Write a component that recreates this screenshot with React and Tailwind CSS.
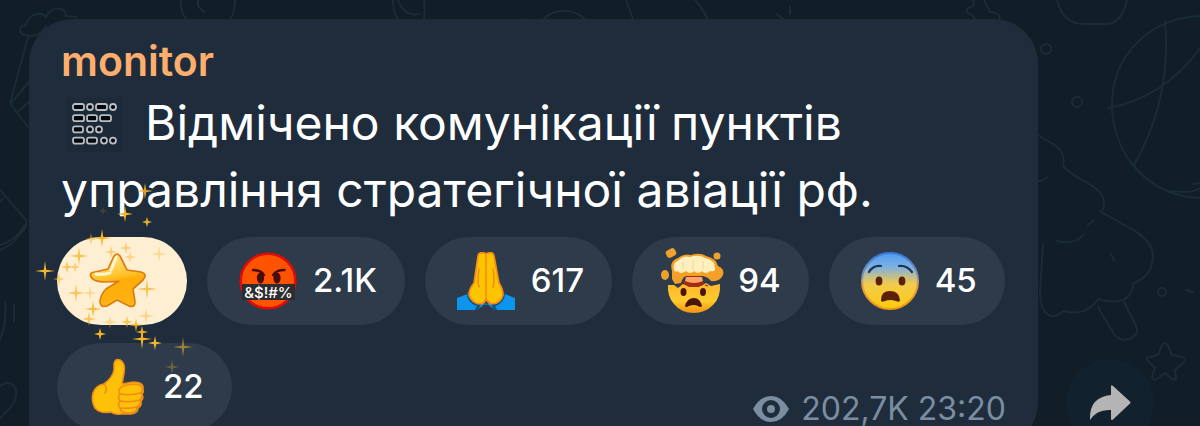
import React from "react";

function Wallpaper() {
  return (
    <svg
      aria-hidden="true"
      viewBox="0 0 1200 426"
      preserveAspectRatio="xMidYMin slice"
      className="absolute inset-0 h-full w-full"
      fill="none"
      stroke="#1a2c37"
      strokeWidth="2"
      strokeLinecap="round"
      strokeLinejoin="round"
    >
      <path d="M26 35C18 34 18 25 26 25C28 15 40 10 46 17C50 6 66 6 66 16L76 17M26 35C34 38 42 34 46 26M28 37L11 100Q10 103 12 106L32 132M12 102L34 76M19 111L34 97" />
      <path d="M0 190L26 220Q28 226 22 232Q12 246 0 250M25 225Q14 242 0 245M0 202L3 198" />
      <path d="M5 302Q7 322 0 340M14 305V322M0 386Q8 380 14 386Q20 396 10 408L0 418" />
      <path d="M181 0Q180 12 187 20M235 0Q235 12 230 20M198 0V6L204 12M393 0Q392 14 402 24L412 32M398 0Q404 17 420 14M424 0Q427 20 418 32" />
      <path d="M516 24Q519 18 527 20Q537 21 541 32M540 24Q548 10 566 11Q584 12 594 32M626 0L640 38M695 0Q708 14 711 32M777 14L784 20M790 6V14M790 38Q792 24 799 22Q804 24 808 36" />
      <path d="M973 0Q976 6 968 8Q964 12 972 15L976 20L973 30Q974 40 983 36Q992 42 998 36L996 24L1000 18Q998 12 990 12L984 0" />
      <path d="M1057 0Q1063 24 1084 24H1108Q1122 22 1127 0" />
      <circle cx="1046" cy="49" r="5" />
      <circle cx="1077" cy="102" r="5" />
      <circle cx="1162" cy="292" r="4" />
      <path d="M1200 16C1150 18 1113 55 1112 102C1111 155 1150 197 1200 198M1165 22Q1172 98 1134 165M1108 108Q1164 98 1200 48M1172 191Q1192 194 1200 188M1193 184L1200 183" />
      <path d="M1038 135L1056 146Q1066 154 1063 166Q1070 174 1086 182Q1104 192 1104 203Q1104 209 1101 212L1128 227Q1153 240 1153 257Q1152 276 1134 283Q1130 305 1108 301Q1102 301 1098 299Q1086 317 1063 311Q1051 322 1043 309Q1040 302 1040 294L1043 244M1038 181Q1045 181 1048 176M1057 241Q1075 245 1083 235M1088 225L1094 220M1098 307L1114 334Q1122 344 1133 337Q1139 332 1136 326L1124 302M1111 254L1114 260" />
      <path d="M1162 345Q1165 341 1168 346L1172 355L1182 357Q1187 359 1183 363L1175 370L1176 377Q1176 381 1172 379L1165 373L1157 379Q1152 381 1152 376L1155 368L1148 361Q1145 357 1150 357L1158 355ZM1186 290L1193 292" />
    </svg>
  );
}

const ROWS = [
  [[0, 11], [14, 6], [23, 11], [37, 6]],
  [[0, 11], [14, 10], [27, 11]],
  [[0, 10], [14, 6], [23, 6]],
  [[0, 11], [14, 10], [28, 6], [37, 6]],
];

function ChannelEmoji() {
  return (
    <svg role="img" aria-label="Channel emblem" viewBox="0 0 54 54" className="h-[54px] w-[54px] shrink-0">
      <rect width="54" height="54" fill="#1c2937" />
      <g fill="#05090e" stroke="#b9bec4" strokeWidth="1.8">
        {ROWS.map((row, r) =>
          row.map(([x, w]) => (
            <rect key={`${r}-${x}`} x={x + 6} y={r * 11.2 + 6} width={w} height="6" rx={w > 6 ? 2 : 3} />
          ))
        )}
      </g>
    </svg>
  );
}

function StarEmoji() {
  return (
    <svg role="img" aria-label="Star" viewBox="0 0 58 58" className="h-[58px] w-[58px] shrink-0">
      <defs>
        <linearGradient id="star" x1="0" y1="0" x2="0.2" y2="1">
          <stop offset="0" stopColor="#ffe9a0" />
          <stop offset="0.45" stopColor="#ffc835" />
          <stop offset="0.62" stopColor="#ffad0a" />
          <stop offset="1" stopColor="#ffb81c" />
        </linearGradient>
      </defs>
      <path d="M26 4Q29 0 32 4L39 18L53 20Q60 22 55 28L45 37L47 50Q47 56 41 54L29 48L19 54Q12 56 12 49Q13 42 18 37L31 29Q25 30 17 30Q6 30 3 25Q1 20 7 20L20 17Z" fill="url(#star)" stroke="#dc7c10" strokeWidth="1.700" strokeLinejoin="round" />
      <path d="M24 28L34 27L53 23L43 36L45 50Q44 53 39 51L29 45L18 51Q14 52 14 48Q15 42 21 38L34 29Z" fill="#ffae0b" opacity=".65" />
      <path d="M28 6L23 18M8 22Q14 23 22 21" fill="none" stroke="#fff6d2" strokeWidth="3" strokeLinecap="round" />
    </svg>
  );
}

function CensoredEmoji() {
  return (
    <svg role="img" aria-label="Swearing face" viewBox="0 0 58 58" className="h-[58px] w-[58px] shrink-0">
      <circle cx="29" cy="29" r="27.3" fill="#ff5300" stroke="#df0b0b" strokeWidth="2.6" />
      <g fill="#4a0d05">
        <ellipse cx="21.5" cy="26" rx="3.6" ry="5.5" />
        <ellipse cx="38" cy="26" rx="3.6" ry="5.5" />
      </g>
      <path d="M14 18Q22 18 25 23M45.500 18Q37 18 34 23" fill="none" stroke="#4a0d05" strokeWidth="2.4" strokeLinecap="round" />
      <rect x="3" y="32" width="53" height="16" rx="1" fill="#2d2d2f" />
      <text x="29.500" y="45.500" textAnchor="middle" fill="#fff" fontSize="15" fontWeight="500" fontFamily="Inter, sans-serif">&amp;$!#%</text>
    </svg>
  );
}

function PrayEmoji() {
  return (
    <svg role="img" aria-label="Folded hands" viewBox="0 0 58 58" className="h-[58px] w-[58px] shrink-0">
      <path d="M0 46L13 41L29 53L45 41L58 46V59H39L29 51L19 59H0Z" fill="#0d95ee" />
      <path d="M11 40Q12 51 22 53L19 59M47 40Q46 51 36 53L39 59" fill="none" stroke="#14547e" strokeWidth="3" />
      <path d="M28.500 1.500Q22 -1 21 4L17 31Q12 37 12 43Q15 52 24 52Q28 51 29 47Q31 51 35 52Q44 51 46 43Q46 37 42 31L37 4Q36 -1 30 1.500Z" fill="#ffc400" stroke="#f58a18" strokeWidth="1.700" strokeLinejoin="round" />
      <path d="M29 2V48M22 17Q20 28 22 35M36 17Q38 28 36 35" fill="none" stroke="#f28a15" strokeWidth="1.500" strokeLinecap="round" />
    </svg>
  );
}

function MindBlownEmoji() {
  return (
    <svg role="img" aria-label="Exploding head" viewBox="0 0 64 66" className="-mx-[3px] h-[66px] w-16 shrink-0">
      <defs>
        <linearGradient id="head" x1="0" y1="0" x2="0" y2="1">
          <stop offset="0" stopColor="#ffb52c" />
          <stop offset=".6" stopColor="#ffcb2e" />
          <stop offset="1" stopColor="#f2920c" />
        </linearGradient>
      </defs>
      <path d="M7 37L13 37L17 40L22 36L27 38H40L45 35L50 38L59 36Q60 49 52 57Q44 65 33 65Q20 65 13 56Q6 48 7 37Z" fill="url(#head)" />
      <path d="M22 35L28 39H38L43 35L39 28H27Z" fill="#a52b10" />
      <path d="M25 29H41L42 33Q33 37 24 33Z" fill="#ffa468" />
      <path d="M11 23Q8 13 17 10Q23 5 30 7Q39 4 45 8Q55 10 57 18Q64 21 62 27Q59 34 50 33Q46 28 40 28H26Q22 28 20 35L14 36L11 31Z" fill="#f2a126" />
      <path d="M13 22Q11 15 18 12Q22 7 29 9Q38 6 44 10Q54 12 54 20Q55 24 49 23Q45 27 41 23Q37 27 33 23Q29 27 25 23Q19 27 17 23Q14 25 13 22Z" fill="#fff0bd" />
      <path d="M22 14V21M32 12V22M42 13V21" fill="none" stroke="#edd497" strokeWidth="1" />
      <g fill="#efa12c">
        <rect x="5" y="1" width="10" height="8" rx="3" transform="rotate(-28 10 5)" />
        <circle cx="56" cy="8" r="3.500" />
        <ellipse cx="4" cy="27" rx="4" ry="5" />
        <path d="M12 28Q18 25 20 31L17 35L12 33Z" />
      </g>
      <g fill="#4b1608">
        <ellipse cx="22.500" cy="44" rx="3" ry="4" />
        <ellipse cx="42" cy="44" rx="3" ry="4" />
        <path d="M24 58Q26 50 33 50Q39 50 41 58Q40 60 37 58Q33 56 28 58Q25 60 24 58Z" />
      </g>
      <path d="M18 37L21 36M44 37L47 38" stroke="#8a2e0b" strokeWidth="1.300" />
    </svg>
  );
}

function FearfulEmoji() {
  return (
    <svg role="img" aria-label="Fearful face" viewBox="0 0 58 58" className="h-[58px] w-[58px] shrink-0">
      <defs>
        <linearGradient id="fear" x1="0" y1="0" x2="0" y2="1">
          <stop offset="0" stopColor="#4f9bf5" />
          <stop offset=".25" stopColor="#7fb0e0" />
          <stop offset=".55" stopColor="#f2cb4d" />
          <stop offset="1" stopColor="#ffcb0d" />
        </linearGradient>
        <linearGradient id="fearEdge" x1="0" y1="0" x2="0" y2="1">
          <stop offset="0" stopColor="#3679d8" />
          <stop offset=".4" stopColor="#7d98b9" />
          <stop offset=".6" stopColor="#e99a43" />
          <stop offset="1" stopColor="#f39a12" />
        </linearGradient>
      </defs>
      <circle cx="29" cy="29" r="28" fill="url(#fear)" stroke="url(#fearEdge)" strokeWidth="2" />
      <path d="M8 20Q12 13 20 14M38 14Q46 13 51 20" fill="none" stroke="#18345f" strokeWidth="2.200" strokeLinecap="round" />
      <g fill="#5a2106">
        <ellipse cx="18" cy="29" rx="3.400" ry="4.500" />
        <ellipse cx="41" cy="29" rx="3.400" ry="4.500" />
        <path d="M20 48Q20 39 29 39Q38 39 39 48Q39 51 35 49Q29 47 24 49Q20 51 20 48Z" />
      </g>
    </svg>
  );
}

function ThumbEmoji() {
  return (
    <svg role="img" aria-label="Thumbs up" viewBox="0 0 58 58" className="h-[58px] w-[58px] shrink-0">
      <g fill="#ffc107" stroke="#f08b18" strokeWidth="1.600" strokeLinejoin="round">
        <path d="M25 6Q26 0 31 2Q37 5 35 15L33 26L44 24Q55 24 54 31Q55 34 53 36Q55 40 52 43Q53 48 49 50Q49 55 42 56H32Q25 57 22 54Q11 56 6 50Q2 43 4 35Q7 27 15 26Q24 19 25 12Z" />
        <path d="M34 28Q42 25 51 27Q55 30 52 35Q54 39 51 42Q53 46 48 49Q48 55 41 55Q32 56 31 50Q28 47 31 43Q28 39 31 36Q28 31 34 28Z" />
      </g>
      <path d="M31 36Q40 38 52 35M31 43Q41 45 51 42M32 50Q40 51 48 49M15 26Q19 30 16 35" fill="none" stroke="#f08b18" strokeWidth="1.500" strokeLinecap="round" />
    </svg>
  );
}

const SPARKS = [
  [45, 271, 10, 1], [145, 191, 8, 0.85], [125, 214, 8, 1], [147, 222, 5, 0.9], [102, 238, 9, 1],
  [91, 239, 6, 0.5], [79, 256, 9, 0.8], [67, 267, 6, 0.7], [75, 267, 5, 0.55], [59, 279, 6, 0.55],
  [111, 252, 6, 0.55], [126, 248, 6, 0.55], [130, 257, 6, 0.45], [159, 254, 8, 0.35], [76, 293, 9, 0.7],
  [90, 293, 7, 0.35], [147, 289, 10, 0.8], [93, 309, 8, 0.85], [89, 319, 7, 0.7], [110, 322, 7, 0.4],
  [127, 322, 6, 0.7], [136, 325, 7, 0.8], [146, 316, 8, 0.45], [100, 334, 6, 1], [142, 339, 10, 1],
  [142, 332, 6, 0.9], [155, 343, 7, 1], [183, 347, 10, 0.55], [172, 367, 7, 0.3], [103, 211, 4, 0.15],
];

function Sparkles() {
  return (
    <svg aria-hidden="true" viewBox="35 180 160 200" className="pointer-events-none absolute -left-[22px] -top-[57px] h-[200px] w-40" fill="#f7b52c">
      {SPARKS.map(([x, y, r, o]) => (
        <path key={`${x}-${y}`} opacity={o} d={`M${x} ${y - r}L${x + 1.2} ${y - 1.2}L${x + r} ${y}L${x + 1.2} ${y + 1.2}L${x} ${y + r}L${x - 1.2} ${y + 1.2}L${x - r} ${y}L${x - 1.2} ${y - 1.2}Z`} />
      ))}
    </svg>
  );
}

const REACTIONS = [
  { Icon: CensoredEmoji, count: "2.1K" },
  { Icon: PrayEmoji, count: "617" },
  { Icon: MindBlownEmoji, count: "94" },
  { Icon: FearfulEmoji, count: "45" },
  { Icon: ThumbEmoji, count: "22" },
];

export default function App() {
  return (
    <main className="relative h-screen overflow-hidden bg-[#111d27] pl-[29px] pt-[19px] font-[Inter,sans-serif]">
      <Wallpaper />
      <div className="relative flex items-end gap-7">
        <article className="max-w-[1009px] flex-1 rounded-t-[44px] rounded-br-[44px] bg-[#1e2c3c] px-7 pb-4 pt-5">
          <h1 className="pl-1 text-[41px] font-semibold leading-[44px] text-[#fcaf6d]">monitor</h1>
          <p className="mt-[6px] pl-1 text-[48px] leading-[67px] text-white">
            <span className="mb-1 mr-6 inline-block h-[54px] pl-[6px] align-middle"><ChannelEmoji /></span>
            Відмічено комунікації пунктів управління стратегічної авіації рф.
          </p>
          <div className="relative mt-[14px]">
            <div className="flex flex-wrap gap-x-5 gap-y-[18px]">
              <button type="button" aria-label="Star reaction" className="flex h-[88px] w-[130px] items-center justify-center rounded-full bg-[#feefd2] pr-[10px]">
                <StarEmoji />
              </button>
              {REACTIONS.map(({ Icon, count }) => (
                <button key={count} type="button" className="flex h-[88px] items-center gap-4 rounded-full bg-[#2d3b4a] pl-8 pr-7 text-[33px] font-medium text-white">
                  <Icon />
                  <span>{count}</span>
                </button>
              ))}
            </div>
            <Sparkles />
            <div className="absolute bottom-2 right-1 flex items-center gap-3 text-[32px] leading-7 text-[#7b8ea1]">
              <svg aria-label="Views" role="img" viewBox="0 0 36 26" className="h-[26px] w-9">
                <path fillRule="evenodd" fill="currentColor" d="M0 13Q7 0 18 0Q29 0 36 13Q29 26 18 26Q7 26 0 13ZM18 4A9 9 0 1 0 18 22A9 9 0 1 0 18 4ZM18 9A4 4 0 1 1 18 17A4 4 0 1 1 18 9Z" />
              </svg>
              <span>202,7K 23:20</span>
            </div>
          </div>
        </article>
        <button type="button" aria-label="Share" className="flex h-[88px] w-[88px] shrink-0 items-center justify-center rounded-full bg-[#11212e]">
          <svg viewBox="0 0 42 36" className="h-9 w-[42px]" fill="#b5b4b4">
            <path d="M22 1.500Q22 -.5 24 1L41 16.500Q42 17.500 41 18.500L24 34.500Q22 36 22 33.500V25Q8 24 1 35Q0 12 22 10Z" />
          </svg>
        </button>
      </div>
    </main>
  );
}
